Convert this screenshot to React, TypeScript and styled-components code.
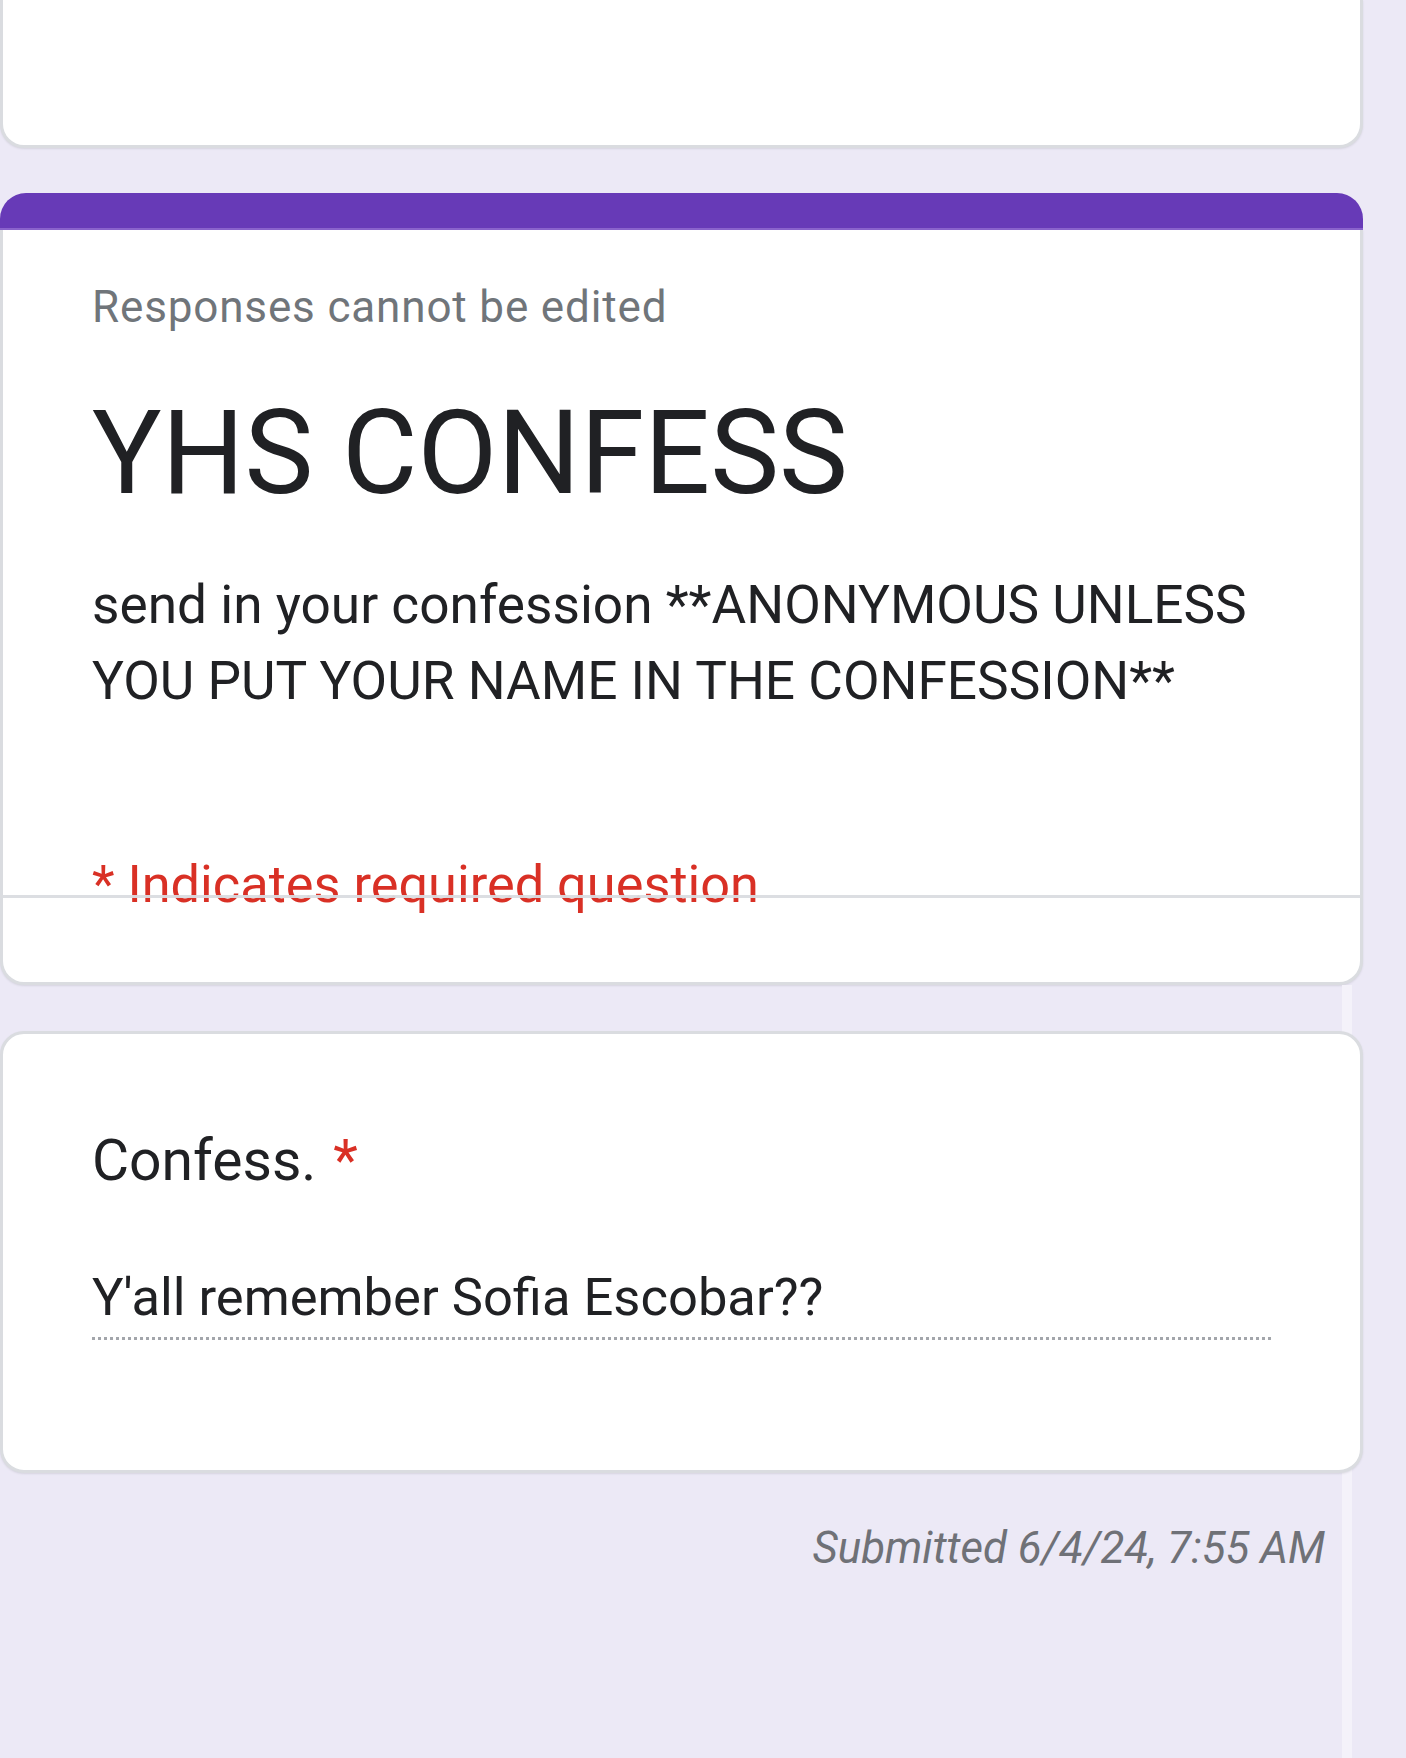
import React from "react";
import styled, { createGlobalStyle } from "styled-components";

const GlobalStyle = createGlobalStyle`
  html, body {
    margin: 0;
    padding: 0;
    background: #ece9f6;
  }
  body {
    font-family: Roboto, "Noto Sans", "Liberation Sans", sans-serif;
    color: #202124;
    -webkit-font-smoothing: antialiased;
  }
  * { box-sizing: border-box; }
`;

const Page = styled.div`
  width: 1406px;
  min-height: 1758px;
  display: flex;
  flex-direction: column;
  overflow: hidden;
`;

const Column = styled.main`
  width: 1363px;
  flex: 1;
  display: flex;
  flex-direction: column;
`;

const Card = styled.section`
  background: #ffffff;
  border: 3px solid #dadce0;
  border-radius: 24px;
  box-shadow: 0 1px 2px rgba(60, 64, 67, 0.12);
`;

const CutCard = styled(Card)`
  height: 148px;
  border-top: none;
  border-top-left-radius: 0;
  border-top-right-radius: 0;
`;

const HeaderCard = styled.section`
  margin-top: 45px;
  display: flex;
  flex-direction: column;
`;

const AccentBar = styled.div`
  height: 37px;
  background: #673ab7;
  border-radius: 26px 26px 0 0;
  box-shadow: inset 0 -2px 0 #8a63cc;
`;

const HeaderBody = styled.div`
  background: #ffffff;
  border: 3px solid #dadce0;
  border-top: none;
  border-radius: 0 0 24px 24px;
  padding-bottom: 84px;
  box-shadow: 0 1px 2px rgba(60, 64, 67, 0.12);
`;

const HeaderContent = styled.div`
  padding: 51px 89px 0;
  display: flex;
  flex-direction: column;
`;

const Notice = styled.div`
  font-size: 44px;
  line-height: 52px;
  letter-spacing: 0.85px;
  color: #70757a;
`;

const Title = styled.h1`
  margin: 51px 0 0;
  font-size: 116px;
  line-height: 138px;
  font-weight: 400;
  color: #202124;
`;

const Description = styled.p`
  margin: 45px 0 0;
  font-size: 53.2px;
  line-height: 76px;
  color: #202124;
`;

const Required = styled.div`
  margin-top: 134px;
  font-size: 52.3px;
  line-height: 62px;
  color: #d93025;
`;

const Divider = styled.div`
  position: relative;
  margin-top: -20px;
  height: 3px;
  background: rgba(218, 220, 224, 0.95);
`;

const LowerArea = styled.div`
  flex: 1;
  padding-top: 46px;
  display: flex;
  flex-direction: column;
  background-image: linear-gradient(
    to right,
    transparent 1342px,
    #f4f2fa 1342px,
    #f4f2fa 1352px,
    transparent 1352px
  );
`;

const QuestionCard = styled(Card)`
  padding: 93px 89px 130px;
  display: flex;
  flex-direction: column;
`;

const QuestionLabel = styled.div`
  font-size: 57px;
  line-height: 68px;
  color: #202124;
`;

const Star = styled.span`
  color: #d93025;
  margin-left: 17px;
`;

const Answer = styled.div`
  margin-top: 71px;
  padding-bottom: 9px;
  font-size: 52.5px;
  line-height: 62px;
  color: #202124;
`;

const DottedRule = styled.div`
  height: 3px;
  background-image: repeating-linear-gradient(
    to right,
    #a3a6ab 0,
    #a3a6ab 3px,
    transparent 3px,
    transparent 6px
  );
`;

const Submitted = styled.div`
  margin-top: 48px;
  padding-right: 38px;
  text-align: right;
  font-size: 43.8px;
  line-height: 54px;
  font-style: italic;
  color: #6f7177;
`;

export default function App() {
  return (
    <>
      <GlobalStyle />
      <Page>
        <Column>
          <CutCard />
          <HeaderCard>
            <AccentBar />
            <HeaderBody>
              <HeaderContent>
                <Notice>Responses cannot be edited</Notice>
                <Title>YHS CONFESS</Title>
                <Description>
                  send in your confession **ANONYMOUS UNLESS YOU PUT YOUR NAME IN THE CONFESSION**
                </Description>
                <Required>* Indicates required question</Required>
              </HeaderContent>
              <Divider />
            </HeaderBody>
          </HeaderCard>
          <LowerArea>
            <QuestionCard>
              <QuestionLabel>
                Confess.<Star>*</Star>
              </QuestionLabel>
              <Answer>Y'all remember Sofia Escobar??</Answer>
              <DottedRule />
            </QuestionCard>
            <Submitted>Submitted 6/4/24, 7:55 AM</Submitted>
          </LowerArea>
        </Column>
      </Page>
    </>
  );
}
